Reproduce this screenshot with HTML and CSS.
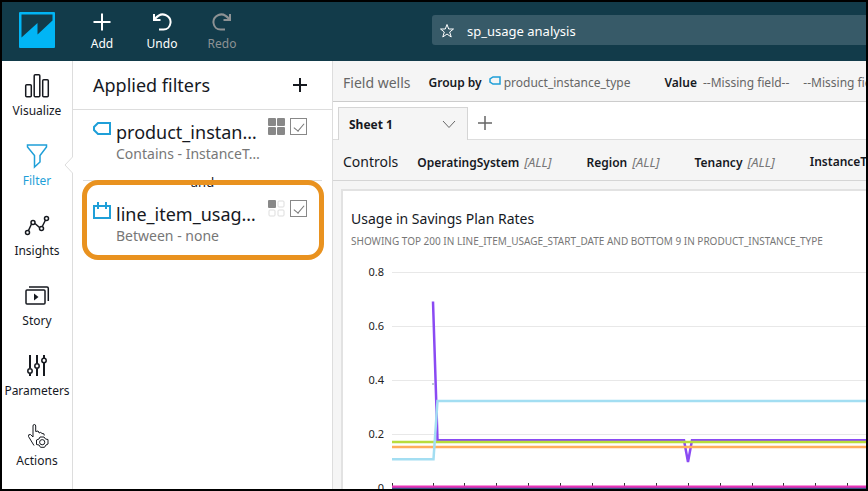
FILE: index.html
```html
<!DOCTYPE html>
<html lang="en">
<head>
<meta charset="utf-8">
<title>sp_usage analysis</title>
<link rel="stylesheet" href="styles.css">
</head>
<body>
<div class="app">
  <header class="topbar">
    <a class="logo" href="#" aria-label="Home">
      <svg width="36" height="36" viewBox="0 0 36 36"><rect width="36" height="36" rx="1" fill="#01b5f5"/><path d="M2.500 2.500H33.500V8.500L18.500 22.500V11L2.500 25.500Z" fill="#123b4a"/></svg>
    </a>
    <button class="tool tool-add" type="button">
      <svg width="20" height="20" viewBox="0 0 20 20"><path d="M10 1.500V18.500M1.500 10H18.500"/></svg>
      <span>Add</span>
    </button>
    <button class="tool" type="button">
      <svg width="20" height="20" viewBox="0 0 20 20"><path d="M2 2V8H8.500M2.500 7.500C6 3 10 1.500 13.500 3C17 4.500 19 7 18.500 11C18 15 15 17.500 11.500 17.500H7"/></svg>
      <span>Undo</span>
    </button>
    <button class="tool tool-off" type="button" disabled>
      <svg width="20" height="20" viewBox="0 0 20 20"><path d="M18 2V8H11.500M17.500 7.500C14 3 10 1.500 6.500 3C3 4.500 1 7 1.500 11C2 15 5 17.500 8.500 17.500H13"/></svg>
      <span>Redo</span>
    </button>
    <div class="doc">
      <svg width="16" height="16" viewBox="0 0 16 16"><path d="M8 1.500L9.700 6H14.500L10.700 9L12.200 14L8 11L3.800 14L5.300 9L1.500 6H6.300Z"/></svg>
      <span>sp_usage analysis</span>
    </div>
  </header>
  <div class="body">
    <nav class="rail">
      <a href="#"><svg width="26" height="26" viewBox="0 0 26 26"><g><rect x="1.700" y="11.700" width="5.600" height="12" rx="1"/><rect x="10.200" y="1.700" width="5.600" height="22" rx="1"/><rect x="18.700" y="6.700" width="5.600" height="17" rx="1"/></g></svg>Visualize</a>
      <a href="#" class="active"><svg width="26" height="26" viewBox="0 0 26 26"><path d="M3.500 2H22.500V4L16 12.500V19L10.500 24V12.500L3.500 4Z"/></svg>Filter</a>
      <a href="#"><svg width="26" height="26" viewBox="0 0 26 26"><path d="M4.500 17.500L7.500 11M11 10.500L15.500 14.500M18.500 13L21.500 7"/><circle cx="3.500" cy="19.500" r="2"/><circle cx="9" cy="9.500" r="2"/><circle cx="17.500" cy="15.500" r="2"/><circle cx="22.500" cy="5.500" r="2"/></svg>Insights</a>
      <a href="#"><svg width="26" height="26" viewBox="0 0 26 26"><rect x="2" y="7" width="19" height="14" rx="1"/><path d="M5 4H23Q24.300 4 24.300 5.300V18"/><path d="M10 10.500L14.500 14L10 17.500Z" class="solid"/></svg>Story</a>
      <a href="#"><svg width="26" height="26" viewBox="0 0 26 26"><g class="thick"><path d="M6 2V15M6 20.500V23M13 2V10.500M13 15.500V23M20 2V5M20 10V23"/></g><circle cx="6" cy="18" r="2.200"/><circle cx="13" cy="13" r="2.200"/><circle cx="20" cy="7.500" r="2.200"/></svg>Parameters</a>
      <a href="#"><svg width="26" height="26" viewBox="0 0 26 26"><g class="thin"><path d="M10 22.500L4.500 13.500Q4 11 6.500 11.500L9 14V3Q9 1.500 10.300 1.500Q11.700 1.500 11.700 3V8.500L14 8Q15 9 15 10Q17 8.500 18 10.500Q20.500 10 20.300 12.500"/><path d="M16 14H20L21.500 16L24 16.500V21L22 22L20.500 24.300H16.500L15 22L12.500 21.500V17L15 16Z"/><circle cx="18.200" cy="19.200" r="2.600"/></g></svg>Actions</a>
    </nav>
    <aside class="filters">
      <svg class="notch" width="9" height="16" viewBox="0 0 9 16"><path class="notch-fill" d="M9 0L1 8L9 16Z"/><path class="notch-line" d="M8.500 0L1 8L8.500 16"/></svg>
      <div class="filters-head">
        <h2>Applied filters</h2>
        <button type="button" aria-label="Add filter"><svg width="14" height="14" viewBox="0 0 14 14"><path d="M7 0V14M0 7H14"/></svg></button>
      </div>
      <div class="filter">
        <svg class="kind" width="18" height="18" viewBox="0 0 18 18"><path d="M17 3V14H5L1 10V7L5 3Z"/></svg>
        <div class="filter-text"><div class="name">product_instan…</div><div class="rule">Contains - InstanceT…</div></div>
        <svg class="scope" width="17" height="17" viewBox="0 0 17 17"><rect width="8" height="8" rx="1"/><rect x="9" width="8" height="8" rx="1"/><rect y="9" width="8" height="8" rx="1"/><rect x="9" y="9" width="8" height="8" rx="1"/></svg>
        <input type="checkbox" checked aria-label="Enable product_instance_type">
      </div>
      <div class="joiner"><span>and</span></div>
      <div class="filter second">
        <svg class="kind" width="18" height="18" viewBox="0 0 18 18"><path d="M1 4H17V16H1ZM5 0V7M13 0V7"/></svg>
        <div class="filter-text"><div class="name">line_item_usag…</div><div class="rule">Between - none</div></div>
        <svg class="scope" width="17" height="17" viewBox="0 0 17 17"><rect width="8" height="8" rx="1"/><g class="empty"><rect x="10" y="1" width="6" height="6" rx="1"/><rect x="1" y="10" width="6" height="6" rx="1"/><rect x="10" y="10" width="6" height="6" rx="1"/></g></svg>
        <input type="checkbox" checked aria-label="Enable line_item_usage_start_date">
        <div class="callout"></div>
      </div>
    </aside>
    <main class="main">
      <div class="wells">
        <span class="wells-title">Field wells</span>
        <b>Group by</b>
        <svg width="12" height="10" viewBox="0 0 12 10"><path d="M11 1V8H4L1 6V3L4 1Z"/></svg>
        <span class="group-field">product_instance_type</span>
        <b>Value</b>
        <span class="missing">--Missing field--</span>
        <span class="missing">--Missing field--</span>
      </div>
      <div class="tabs">
        <button class="tab" type="button">Sheet 1<svg width="14" height="9" viewBox="0 0 14 9"><path d="M1 1L7 7.500L13 1"/></svg></button>
        <button class="newtab" type="button" aria-label="Add sheet"><svg width="14" height="14" viewBox="0 0 14 14"><path d="M7 0V14M0 7H14"/></svg></button>
      </div>
      <div class="controls">
        <span class="controls-title">Controls</span>
        <span class="control"><b>OperatingSystem</b><i>[ALL]</i></span>
        <span class="control"><b>Region</b><i>[ALL]</i></span>
        <span class="control"><b>Tenancy</b><i>[ALL]</i></span>
        <span class="control"><b>InstanceType</b></span>
      </div>
      <div class="sheet">
        <section class="card">
          <h3>Usage in Savings Plan Rates</h3>
          <p>SHOWING TOP 200 IN LINE_ITEM_USAGE_START_DATE AND BOTTOM 9 IN PRODUCT_INSTANCE_TYPE</p>
          <svg class="chart" role="img" aria-label="Line chart of usage in savings plan rates">
            <g transform="translate(-343 -256)">
              <path class="grid" d="M392 272.500H2400M392 326.500H2400M392 380.500H2400M392 434.500H2400"/>
              <g class="axis"><text x="384" y="276">0.8</text><text x="384" y="330">0.6</text><text x="384" y="384">0.4</text><text x="384" y="438">0.2</text><text x="384" y="492">0</text></g>
              <path class="ticks" d="M392.500 483V488M433.500 483V488M464.500 483V488M496.500 483V488M528.500 483V488M560.500 483V488M592.500 483V488M624.500 483V488M656.500 483V488M688.500 483V488M720.500 483V488M752.500 483V488M783.500 483V488M815.500 483V488M847.500 483V488"/>
              <path class="line violet" d="M433 301.500L437.500 440.300H684L688 462L692 440.300H2400"/>
              <path class="line green" d="M392 442H2400"/>
              <path class="line orange" d="M392 447H2400"/>
              <path class="line sky" d="M392 459.200H433.500L437.500 401H2400"/>
              <path class="line pink" d="M392 486.700H2400"/>
              <path class="line navy" d="M392 489H2400"/>
              <path class="dot" d="M432 384H434"/>
            </g>
          </svg>
        </section>
      </div>
    </main>
  </div>
</div>
</body>
</html>
```
FILE: styles.css
```css
* { box-sizing: border-box; }
body { margin: 0; font-family: "Noto Sans", "Open Sans", sans-serif; font-size: 12px; color: #16191f; }
button { font: inherit; color: inherit; background: none; border: 0; padding: 0; }
a { color: inherit; text-decoration: none; }
svg { display: block; flex: none; fill: none; stroke: currentColor; }
h2, h3, p { margin: 0; font-weight: 400; }
b { font-weight: 600; }
.app { height: 100vh; border: 2px solid #000; overflow: hidden; display: flex; flex-direction: column; background: #fff; }

.topbar { flex: none; height: 59px; background: #123b4a; color: #fff; display: flex; align-items: center; padding: 0 0 3px 17px; }
.logo svg { stroke: none; }
.tool { width: 60px; padding-top: 3px; display: flex; flex-direction: column; align-items: center; gap: 4px; line-height: 16px; stroke-width: 2; }
.tool-add { margin-left: 17px; }
.tool-off { color: #8d9294; }
.doc { flex: 1; margin-left: 180px; height: 30px; border-radius: 3px 0 0 3px; background: #375a68; display: flex; align-items: center; gap: 12px; padding: 1px 0 0 7px; font-size: 13px; }

.body { flex: 1; min-height: 0; display: flex; }
.rail { width: 71px; flex: none; border-right: 1px solid #ddd; padding-top: 12px; display: flex; flex-direction: column; gap: 24px; }
.rail a { display: flex; flex-direction: column; align-items: center; gap: 4px; line-height: 16px; }
.rail svg { stroke-width: 1.5; }
.rail .active { color: #1f9fd8; }
.rail .solid { fill: currentColor; stroke: none; }
.rail .thick { stroke-width: 2; }
.rail .thin { stroke-width: 1; }

.filters { width: 260px; flex: none; border-right: 1px solid #ddd; position: relative; }
.notch { position: absolute; left: -9px; top: 96px; }
.notch-fill { fill: #fff; stroke: #fff; }
.notch-line { stroke: #ddd; }
.filters-head { height: 49px; border-bottom: 1px solid #ddd; padding: 0 25px 0 20px; display: flex; align-items: center; justify-content: space-between; }
.filters-head h2 { font-size: 18px; }
.filters-head svg { stroke-width: 2; }
.filter { position: relative; display: flex; padding: 8px 25px 0 20px; }
.filter .kind { margin-top: 2px; color: #1f9fd8; stroke-width: 2; }
.filter-text { width: 142px; margin: 2px 10px 0 5px; white-space: nowrap; }
.name { font-size: 18px; line-height: 24px; }
.rule { font-size: 14px; line-height: 20px; color: #777; }
.scope { fill: #888; stroke: none; }
.scope .empty { fill: none; stroke: #ddd; }
.filter input { appearance: none; width: 17px; height: 17px; margin: 0 0 0 5px; flex: none; border: 1px solid #888; background: #fff; display: grid; place-items: center; }
.filter input::before { content: ""; width: 5px; height: 9px; border: solid #777; border-width: 0 1px 1px 0; transform: translateY(-1px) rotate(40deg); }
.joiner { height: 30px; font-size: 13px; line-height: 24px; margin: 6px 10px 0; text-align: center; background: linear-gradient(#ddd, #ddd) 0 10px / 100% 1px no-repeat; }
.second { padding-top: 0; }
.callout { position: absolute; left: 9px; right: 8px; top: -20px; height: 80px; border: 5px solid #e9921f; border-radius: 16px; }

.main { flex: 1; min-width: 0; background: #f5f5f5; display: flex; flex-direction: column; white-space: nowrap; overflow: hidden; }
.wells { height: 41px; flex: none; border-bottom: 1px solid #ccc; padding: 2px 0 0 10px; display: flex; align-items: center; color: #666; }
.wells b { color: #16191f; }
.wells-title { font-size: 14px; margin-right: 18px; }
.wells svg { margin: 0 3px 2px 7px; color: #1f9fd8; stroke-width: 1.5; }
.group-field { margin-right: 34px; }
.missing { margin: 0 8px 0 6px; }
.tabs { height: 38px; flex: none; background: #fff; border-bottom: 1px solid #ddd; padding: 5px 0 0 5px; display: flex; }
.tab { width: 130px; height: 33px; border: 1px solid #d5d5d5; border-bottom: 0; background: #f5f5f5; padding: 0 11px 0 10px; display: flex; align-items: center; justify-content: space-between; font-weight: 700; }
.tab svg, .newtab { color: #666; }
.newtab { margin-left: 10px; }
.newtab svg { stroke-width: 1.5; }
.controls { height: 41px; flex: none; border-bottom: 1px solid #d5d5d5; padding: 3px 0 0 10px; display: flex; align-items: center; gap: 35px; }
.controls-title { font-size: 14px; margin-right: -16px; }
.control { display: flex; align-items: baseline; gap: 5px; }
.control i { font-size: 13px; color: #777; }
.sheet { flex: 1; min-height: 0; padding: 8px 0 0 8px; display: flex; }
.card { flex: 1; min-width: 0; background: #fff; border: solid #e2e2e2; border-width: 2px 0 0 2px; padding-top: 18px; overflow: hidden; }
.card h3 { font-size: 14px; line-height: 20px; padding-left: 8px; }
.card p { font-size: 10px; line-height: 16px; margin: 4px 0 7px; padding-left: 8px; color: #777; }
.chart { width: 100%; height: 233px; }
.chart .grid { stroke: #e8e8e8; }
.axis text { font-size: 11px; text-anchor: end; fill: #222; stroke: none; }
.ticks { stroke: #333; }
.line { stroke-width: 2.5; }
.violet { stroke: #8a4af3; }
.green { stroke: #b9dc3c; }
.orange { stroke: #ffad5c; }
.sky { stroke: #a3def2; }
.pink { stroke: #e832b8; }
.navy { stroke: #3f4f87; }
.dot { stroke: #7d97a8; }
```
